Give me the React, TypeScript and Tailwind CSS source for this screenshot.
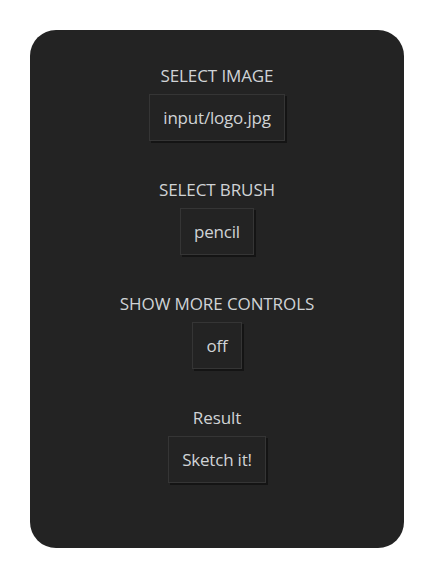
const sections = [
  { label: "SELECT IMAGE", value: "input/logo.jpg" },
  { label: "SELECT BRUSH", value: "pencil" },
  { label: "SHOW MORE CONTROLS", value: "off" },
  { label: "Result", value: "Sketch it!" },
];

export default function App() {
  return (
    <div
      className="min-h-[579px] w-[434px] bg-white pt-[30px] pl-[30px]"
      style={{ fontFamily: '"Open Sans", "Noto Sans", sans-serif' }}
    >
      <div className="flex h-[518px] w-[374px] flex-col items-center gap-[39px] rounded-[26px] bg-[#232323] pt-[36px]">
        {sections.map((s) => (
          <div key={s.label} className="flex flex-col items-center">
            <div className="text-[17px] leading-[20px] tracking-[-0.1px] text-[#d0d3d6]">
              {s.label}
            </div>
            <button className="mt-[8px] h-[47px] border border-[#353535] bg-[#232323] px-[13px] text-[17px] tracking-[-0.2px] text-[#d0d3d6] shadow-[2px_2px_0_#141414]">
              {s.value}
            </button>
          </div>
        ))}
      </div>
    </div>
  );
}
